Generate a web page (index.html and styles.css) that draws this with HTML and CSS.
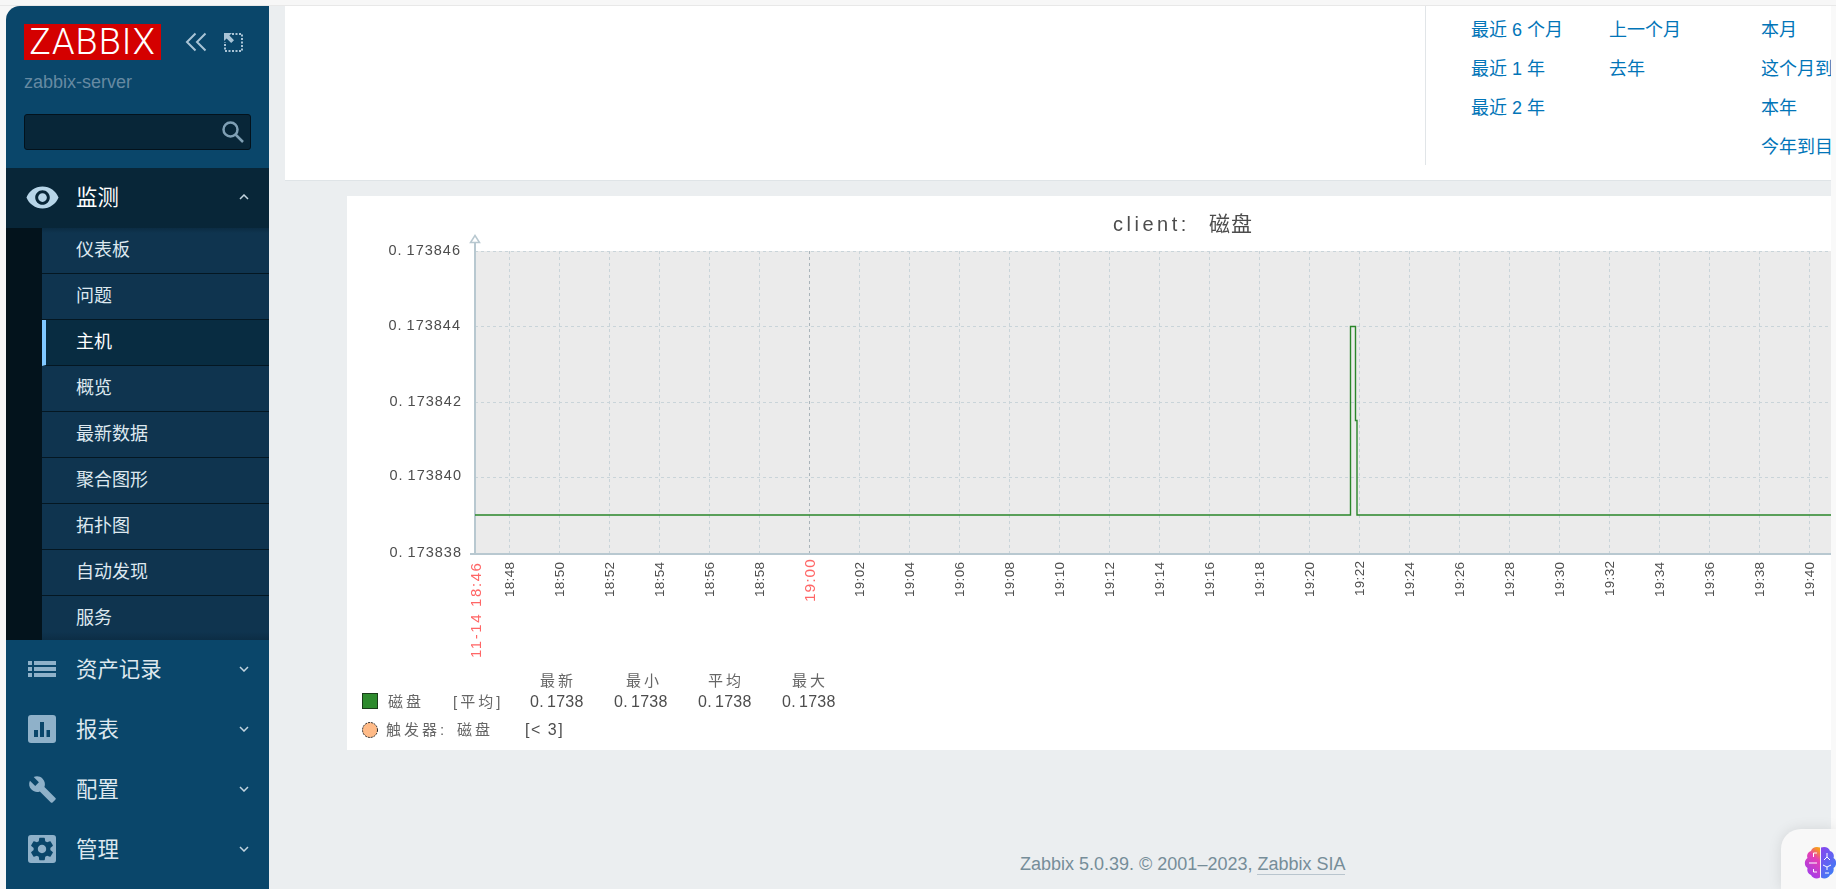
FILE: index.html
```html
<!DOCTYPE html>
<html lang="zh-CN">
<head>
    <meta charset="UTF-8">
    <meta name="viewport" content="width=device-width, initial-scale=1.0">
    <title>Zabbix</title>
    <link rel="stylesheet" href="styles.css">
</head>
<body>
    <aside class="sidebar">
        <div class="sidebar-head">
            <div class="logo-row">
                <div class="logo">ZABBIX</div>
                <svg class="head-icon collapse-icon" width="22" height="20" viewBox="0 0 22 20"><path d="M10.5 1.5 2 10l8.5 8.5M20.5 1.5 12 10l8.5 8.5"/></svg>
                <svg class="head-icon expand-icon" width="20" height="20" viewBox="0 0 20 20"><path class="dots" d="M9 2h10v17H2V10"/><path class="arrow" d="M1 1h8L6.4 3.6 11 8.2 8.2 11 3.600 6.400 1 9z"/></svg>
            </div>
            <div class="server-name">zabbix-server</div>
            <div class="search-box">
                <svg width="24" height="24" viewBox="0 0 24 24"><circle cx="9.500" cy="9.500" r="7"/><path d="m14.500 14.500 7.500 7.500"/></svg>
            </div>
        </div>

        <nav>
            <div class="menu-item open">
                <span class="menu-icon">
                    <svg width="35" height="35" viewBox="0 0 24 24"><path d="M12 4.500C7 4.500 2.730 7.610 1 12c1.730 4.390 6 7.500 11 7.500s9.270-3.110 11-7.500c-1.730-4.390-6-7.500-11-7.500zM12 17c-2.760 0-5-2.240-5-5s2.240-5 5-5 5 2.240 5 5-2.240 5-5 5zm0-8c-1.660 0-3 1.340-3 3s1.340 3 3 3 3-1.340 3-3-1.340-3-3-3z"/></svg>
                </span>
                <span class="menu-label">监测</span>
                <svg class="chevron" width="10" height="6" viewBox="0 0 10 6"><path d="m1 5 4-4 4 4"/></svg>
            </div>
            <ul class="submenu">
                <li>仪表板</li>
                <li>问题</li>
                <li class="selected">主机</li>
                <li>概览</li>
                <li>最新数据</li>
                <li>聚合图形</li>
                <li>拓扑图</li>
                <li>自动发现</li>
                <li>服务</li>
            </ul>
            <div class="menu-item">
                <span class="menu-icon">
                    <svg width="28" height="16" viewBox="0 0 28 16"><path d="M0 0h4v4H0zM6 0h22v4H6zM0 6h4v4H0zM6 6h22v4H6zM0 12h4v4H0zM6 12h22v4H6z"/></svg>
                </span>
                <span class="menu-label">资产记录</span>
                <svg class="chevron" width="10" height="6" viewBox="0 0 10 6"><path d="m1 1 4 4 4-4"/></svg>
            </div>
            <div class="menu-item">
                <span class="menu-icon">
                    <svg width="28" height="28" viewBox="0 0 28 28"><rect width="28" height="28" rx="3"/><path class="cut" d="M6 15h4v7H6zM12 7h4v15h-4zM18.500 15h3.500v7h-3.500z"/></svg>
                </span>
                <span class="menu-label">报表</span>
                <svg class="chevron" width="10" height="6" viewBox="0 0 10 6"><path d="m1 1 4 4 4-4"/></svg>
            </div>
            <div class="menu-item">
                <span class="menu-icon">
                    <svg width="29" height="29" viewBox="0 0 24 24"><path d="M22.700 19l-9.100-9.100c.9-2.300.4-5-1.500-6.900-2-2-5-2.400-7.400-1.300L9 6 6 9 1.600 4.700C.4 7.100.9 10.100 2.900 12.100c1.900 1.900 4.600 2.400 6.900 1.500l9.100 9.100c.4.4 1 .4 1.400 0l2.300-2.300c.5-.4.5-1.100.1-1.400z"/></svg>
                </span>
                <span class="menu-label">配置</span>
                <svg class="chevron" width="10" height="6" viewBox="0 0 10 6"><path d="m1 1 4 4 4-4"/></svg>
            </div>
            <div class="menu-item">
                <span class="menu-icon">
                    <svg width="28" height="28" viewBox="0 0 24 24"><rect width="24" height="24" rx="2.500"/><path class="cut" d="M19.140 12.940c.04-.3.06-.61.06-.94 0-.32-.02-.64-.07-.94l2.030-1.580c.18-.14.23-.41.12-.61l-1.920-3.320c-.12-.22-.37-.29-.59-.22l-2.390.96c-.5-.38-1.030-.7-1.620-.94l-.36-2.540c-.04-.24-.24-.41-.48-.41h-3.840c-.24 0-.43.17-.47.41l-.36 2.540c-.59.24-1.130.57-1.620.94l-2.390-.96c-.22-.08-.47 0-.59.22L2.740 8.870c-.12.21-.08.47.12.61l2.030 1.580c-.05.3-.09.63-.09.94s.02.64.07.94l-2.030 1.580c-.18.14-.23.41-.12.61l1.920 3.320c.12.22.37.29.59.22l2.390-.96c.5.38 1.030.7 1.620.94l.36 2.54c.05.24.24.41.48.41h3.840c.24 0 .44-.17.47-.41l.36-2.540c.59-.24 1.130-.56 1.620-.94l2.390.96c.22.08.47 0 .59-.22l1.920-3.320c.12-.22.07-.47-.12-.61l-2.010-1.580zM12 15.600c-1.980 0-3.600-1.620-3.600-3.600s1.620-3.600 3.600-3.600 3.600 1.620 3.600 3.600-1.620 3.600-3.600 3.600z"/></svg>
                </span>
                <span class="menu-label">管理</span>
                <svg class="chevron" width="10" height="6" viewBox="0 0 10 6"><path d="m1 1 4 4 4-4"/></svg>
            </div>
        </nav>
    </aside>

    <main class="main">
        <section class="time-panel">
            <div class="quick-ranges">
                <div class="range-col col-a">
                    <a>最近 6 个月</a>
                    <a>最近 1 年</a>
                    <a>最近 2 年</a>
                </div>
                <div class="range-col col-b">
                    <a>上一个月</a>
                    <a>去年</a>
                </div>
                <div class="range-col col-c">
                    <a>本月</a>
                    <a>这个月到目前</a>
                    <a>本年</a>
                    <a>今年到目前</a>
                </div>
            </div>
        </section>

        <section class="graph-panel">
            <svg class="graph" width="1484" height="554" viewBox="0 0 1484 554">
                <text class="graph-title" x="766" y="35">client: <tspan class="title-cjk" x="862">磁盘</tspan></text>

                <rect class="plot" x="128" y="55" width="1356" height="303"/>
                <path class="grid" d="M128 55.500H1484M128 130.500H1484M128 206.500H1484M128 281.500H1484"/>
                <path class="grid" d="M162.500 55V358M212.500 55V358M262.500 55V358M312.500 55V358M362.500 55V358M412.500 55V358M512.500 55V358M562.500 55V358M612.500 55V358M662.500 55V358M712.500 55V358M762.500 55V358M812.500 55V358M862.500 55V358M912.500 55V358M962.500 55V358M1012.500 55V358M1062.500 55V358M1112.500 55V358M1162.500 55V358M1212.500 55V358M1262.500 55V358M1312.500 55V358M1362.500 55V358M1412.500 55V358M1462.500 55V358"/>
                <path class="grid major" d="M462.500 55V358"/>
                <path class="axis" d="M128 44V358H1484M123 358H128"/>
                <path class="axis-arrow" d="M128 39.500l4.500 7h-9z"/>

                <path class="data-line" d="M128 319H1003.500V130.500H1008.500V224.500H1010V319H1484"/>

                <g class="y-labels">
                    <text x="114" y="59">0.<tspan dx="4">173846</tspan></text>
                    <text x="114" y="134">0.<tspan dx="4">173844</tspan></text>
                    <text x="115" y="210">0.<tspan dx="4">173842</tspan></text>
                    <text x="115" y="284">0.<tspan dx="4">173840</tspan></text>
                    <text x="115" y="361">0.<tspan dx="4">173838</tspan></text>
                </g>

                <g class="x-labels">
                    <text class="red wide" transform="translate(134 462) rotate(-90)">11-14 18:46</text>
                    <text transform="translate(167 401) rotate(-90)">18:48</text>
                    <text transform="translate(217 401) rotate(-90)">18:50</text>
                    <text transform="translate(267 401) rotate(-90)">18:52</text>
                    <text transform="translate(317 401) rotate(-90)">18:54</text>
                    <text transform="translate(367 401) rotate(-90)">18:56</text>
                    <text transform="translate(417 401) rotate(-90)">18:58</text>
                    <text class="red big" transform="translate(468 406) rotate(-90)">19:00</text>
                    <text transform="translate(517 401) rotate(-90)">19:02</text>
                    <text transform="translate(567 401) rotate(-90)">19:04</text>
                    <text transform="translate(617 401) rotate(-90)">19:06</text>
                    <text transform="translate(667 401) rotate(-90)">19:08</text>
                    <text transform="translate(717 401) rotate(-90)">19:10</text>
                    <text transform="translate(767 401) rotate(-90)">19:12</text>
                    <text transform="translate(817 401) rotate(-90)">19:14</text>
                    <text transform="translate(867 401) rotate(-90)">19:16</text>
                    <text transform="translate(917 401) rotate(-90)">19:18</text>
                    <text transform="translate(967 401) rotate(-90)">19:20</text>
                    <text transform="translate(1017 400) rotate(-90)">19:22</text>
                    <text transform="translate(1067 401) rotate(-90)">19:24</text>
                    <text transform="translate(1117 401) rotate(-90)">19:26</text>
                    <text transform="translate(1167 401) rotate(-90)">19:28</text>
                    <text transform="translate(1217 401) rotate(-90)">19:30</text>
                    <text transform="translate(1267 400) rotate(-90)">19:32</text>
                    <text transform="translate(1317 401) rotate(-90)">19:34</text>
                    <text transform="translate(1367 401) rotate(-90)">19:36</text>
                    <text transform="translate(1417 401) rotate(-90)">19:38</text>
                    <text transform="translate(1467 401) rotate(-90)">19:40</text>
                </g>

                <g class="legend">
                    <text class="legend-head" x="193" y="490">最新</text>
                    <text class="legend-head" x="279" y="490">最小</text>
                    <text class="legend-head" x="361" y="490">平均</text>
                    <text class="legend-head" x="445" y="490">最大</text>

                    <rect class="swatch" x="15.500" y="497.500" width="15" height="15"/>
                    <text class="legend-cjk" x="41" y="511">磁盘</text>
                    <text class="legend-cjk" x="106" y="511">[平均]</text>
                    <text x="183" y="511">0.<tspan dx="3">1738</tspan></text>
                    <text x="267" y="511">0.<tspan dx="3">1738</tspan></text>
                    <text x="351" y="511">0.<tspan dx="3">1738</tspan></text>
                    <text x="435" y="511">0.<tspan dx="3">1738</tspan></text>

                    <circle class="trigger" cx="23" cy="534" r="7.500"/>
                    <text class="legend-cjk" x="39" y="539">触发器: <tspan x="110">磁盘</tspan></text>
                    <text class="legend-limit" x="178" y="539">[&lt; 3]</text>
                </g>
            </svg>
        </section>

        <footer class="footer">Zabbix 5.0.39. © 2001–2023, <a>Zabbix SIA</a></footer>
    </main>

    <div class="side-strip"></div>

    <div class="assistant">
        <svg width="34" height="34" viewBox="0 0 34 34">
            <defs>
                <linearGradient id="brainLeft" x1="0.700" y1="0" x2="0.300" y2="1">
                    <stop offset="0" stop-color="#f79a1f"/>
                    <stop offset="0.300" stop-color="#e63fb4"/>
                    <stop offset="1" stop-color="#9a3df0"/>
                </linearGradient>
                <linearGradient id="brainRight" x1="0" y1="0" x2="0.600" y2="1">
                    <stop offset="0" stop-color="#8a45ee"/>
                    <stop offset="1" stop-color="#3d7df5"/>
                </linearGradient>
            </defs>
            <path fill="url(#brainLeft)" d="M17 1.500C13 0 9 1.500 8 5 4.500 6 3.500 9.500 4.500 12 1 14 1 20 4.500 22c-.8 3.500 1 6 3.500 7 1.500 3.500 6 4.500 9 2.500z"/>
            <path fill="url(#brainRight)" d="M18 1.500C22 0 26 1.500 27 5c3.500 1 4.500 4.500 3.500 7 3.500 2 3.500 8 0 10 .8 3.500-1 6-3.500 7-1.500 3.500-6 4.500-9 2.500z"/>
            <path class="circuit" d="M14 7H10.500V11M14 17H6M14 26H10.500V23M24 7V11L21 14M24 11L27 14M20 19L24 21L28 19M24 21V24M22 27H26"/>
        </svg>
    </div>
</body>
</html>
```

FILE: styles.css
```css
* {
    box-sizing: border-box;
}
html, body {
    height: 100%;
}
body {
    margin: 0;
    padding: 6px 5px 0 6px;
    display: flex;
    overflow: hidden;
    background-color: #f7f7f7;
    box-shadow: inset 0 5px 0 #f7f7f7, inset 0 6px 0 #e8e8e8;
    font-family: "Liberation Sans", "Noto Sans CJK SC", sans-serif;
    font-size: 18px;
}

/* sidebar */
.sidebar {
    width: 263px;
    flex-shrink: 0;
    background-color: #0a466a;
    border-top-left-radius: 14px;
    overflow: hidden;
}
.sidebar-head {
    height: 162px;
    padding: 18px 18px 0;
}
.logo-row {
    display: flex;
    align-items: center;
}
.logo {
    width: 137px;
    height: 36px;
    background-color: #d40000;
    color: #fff;
    font-family: Roboto, "Liberation Sans", sans-serif;
    font-size: 36px;
    font-weight: 300;
    letter-spacing: 1px;
    line-height: 36px;
    text-align: center;
}
.head-icon path {
    fill: none;
    stroke: #a9c4d6;
}
.collapse-icon {
    margin-left: 24px;
}
.collapse-icon path {
    stroke-width: 2px;
}
.expand-icon {
    margin-left: 16px;
}
.expand-icon .dots {
    stroke-width: 2px;
    stroke-dasharray: 2 1.500;
}
.expand-icon .arrow {
    fill: #a9c4d6;
    stroke: none;
}
.server-name {
    margin-top: 12px;
    height: 20px;
    line-height: 21px;
    color: #668aa2;
}
.search-box {
    margin-top: 22px;
    width: 227px;
    height: 36px;
    display: flex;
    align-items: center;
    justify-content: flex-end;
    padding-right: 5px;
    background-color: #082638;
    border: 1px solid #03121c;
    border-radius: 3px;
}
.search-box svg {
    fill: none;
    stroke: #7f9fb4;
    stroke-width: 2.500px;
}
.menu-item {
    height: 60px;
    display: flex;
    align-items: center;
    padding: 0 20px 2px 18px;
    font-size: 21.400px;
    color: #dde8ef;
}
.menu-item.open {
    background-color: #082638;
    color: #fff;
}
.menu-label {
    margin-bottom: 4px;
}
.menu-icon {
    width: 36px;
    margin-right: 16px;
    display: flex;
    align-items: center;
    justify-content: center;
}
.menu-icon svg {
    fill: #8fb1c9;
}
.menu-icon .cut {
    fill: #0a466a;
}
.menu-item.open .menu-icon svg {
    fill: #b7d5e8;
}
.chevron {
    margin-left: auto;
    fill: none;
    stroke: #c3d4df;
    stroke-width: 1.500px;
}
.submenu {
    margin: 0;
    padding: 0 0 0 36px;
    list-style: none;
    background-color: #03131c;
}
.submenu li {
    height: 46px;
    padding-left: 34px;
    line-height: 44px;
    background-color: #0f344f;
    border-bottom: 1px solid #041722;
    color: #dde8ef;
}
.submenu li.selected {
    background-color: #082c41;
    border-left: 4px solid #80c8ff;
    padding-left: 30px;
    color: #fff;
}
.submenu li:first-child {
    background-image: linear-gradient(#0b2c43, #0f344f 5px);
}
.submenu li:last-child {
    height: 44px;
    border-bottom: 0;
    background-image: linear-gradient(#0f344f 36px, #0c2d45);
}

/* main column */
.main {
    flex: 1;
    min-width: 0;
    background-color: #ebeef0;
    overflow: hidden;
}
.time-panel {
    margin-left: 16px;
    height: 175px;
    background-color: #fff;
    border-bottom: 1px solid #dfe4e7;
    overflow: hidden;
}
.quick-ranges {
    margin-left: 1140px;
    width: 430px;
    height: 159px;
    display: flex;
    padding-top: 5px;
    border-left: 1px solid #e1e5e8;
    white-space: nowrap;
}
.range-col {
    flex-shrink: 0;
    display: flex;
    flex-direction: column;
}
.range-col a {
    height: 39px;
    line-height: 39px;
    color: #0275b8;
}
.col-a {
    width: 138px;
    margin-left: 45px;
}
.col-b {
    width: 152px;
}
.graph-panel {
    margin: 15px 0 0 78px;
    height: 554px;
    background-color: #fff;
    overflow: hidden;
}
.graph {
    display: block;
    filter: blur(0.35px);
}
.graph text {
    font-family: "Liberation Sans", "Noto Sans CJK SC", sans-serif;
    fill: #4d4d4d;
}
.graph-title {
    font-size: 20px;
    letter-spacing: 3.500px;
}
.title-cjk {
    font-size: 21px;
    letter-spacing: 1px;
}
.plot {
    fill: #ebebeb;
}
.grid {
    fill: none;
    stroke: #c9d4d9;
    stroke-dasharray: 3 3;
}
.grid.major {
    stroke: #a9b4ba;
}
.axis {
    fill: none;
    stroke: #b8c8d0;
    stroke-width: 2px;
}
.axis-arrow {
    fill: #fff;
    stroke: #b8c8d0;
    stroke-width: 1.500px;
}
.data-line {
    fill: none;
    stroke: #2a862a;
    stroke-width: 1.400px;
}
.y-labels text {
    font-size: 14.500px;
    letter-spacing: 1px;
    text-anchor: end;
}
.x-labels text {
    font-size: 13.500px;
    letter-spacing: 0.300px;
}
.graph .x-labels .red {
    fill: #f66;
}
.x-labels .big {
    font-size: 15.500px;
    letter-spacing: 1px;
}
.x-labels .wide {
    font-size: 15px;
    letter-spacing: 1.600px;
}
.legend text {
    font-size: 16px;
    letter-spacing: 0.300px;
}
.graph .legend-cjk,
.graph .legend-head {
    font-size: 15px;
    letter-spacing: 3px;
    fill: #666;
}
.graph .legend-limit {
    font-size: 16px;
    letter-spacing: 1.500px;
}
.swatch {
    fill: #2e8b2e;
    stroke: #1a3d1a;
}
.trigger {
    fill: #ffbb88;
    stroke: #222;
    stroke-dasharray: 2 1;
}
.footer {
    margin-top: 104px;
    padding-left: 751px;
    height: 20px;
    line-height: 20px;
    color: #768d99;
    white-space: nowrap;
}
.footer a {
    border-bottom: 1px solid #b9c5ce;
}

/* browser edge and floating helper button */
.side-strip {
    position: absolute;
    top: 6px;
    right: 0;
    bottom: 0;
    width: 5px;
    background-color: #f9f9f9;
}
.assistant {
    position: absolute;
    right: 0;
    bottom: 0;
    width: 55px;
    height: 60px;
    padding: 17px 0 0 22px;
    background-color: #f8f8f8;
    border-top-left-radius: 20px;
    box-shadow: 0 0 14px rgba(0, 0, 0, 0.1);
    overflow: hidden;
}
.assistant svg {
    display: block;
}
.circuit {
    fill: none;
    stroke: #fff;
    stroke-width: 1px;
}
```
